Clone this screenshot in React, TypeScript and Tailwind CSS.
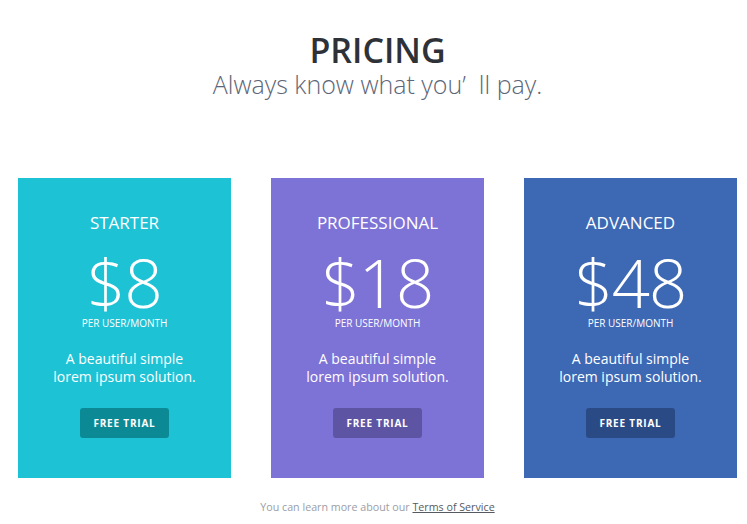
const plans = [
  { name: 'STARTER', price: '$8', card: 'bg-[#1ec2d5]', button: 'bg-[#0b8a96]' },
  { name: 'PROFESSIONAL', price: '$18', card: 'bg-[#7d72d6]', button: 'bg-[#5d54a4]' },
  { name: 'ADVANCED', price: '$48', card: 'bg-[#3d68b4]', button: 'bg-[#2a4a86]' },
]

function PlanCard({ name, price, card, button }: (typeof plans)[number]) {
  return (
    <div className={`flex h-[300px] w-[213px] flex-col items-center text-white ${card}`}>
      <h3 className="mt-[34px] text-[17px] leading-[22px] font-normal">{name}</h3>
      <div className="mt-[18px] text-[67px] leading-[60px] font-light tracking-[-1px]">{price}</div>
      <div className="mt-[5px] text-[10px] leading-[12px]">PER USER/MONTH</div>
      <p className="mt-[21px] text-center text-[14px] leading-[18px]">
        A beautiful simple
        <br />
        lorem ipsum solution.
      </p>
      <button
        className={`mt-[22px] h-[30px] w-[89px] rounded-[3px] text-[10px] font-bold tracking-[0.8px] ${button}`}
      >
        FREE TRIAL
      </button>
    </div>
  )
}

export default function App() {
  return (
    <div className="flex h-[524px] w-[747px] flex-col items-center bg-white pl-[8px] font-['Open_Sans',sans-serif]">
      <h1 className="mt-[28px] text-[34px] leading-[44px] font-semibold text-[#2e3238]">PRICING</h1>
      <p className="mt-[-4px] text-[25px] leading-[32px] font-light text-[#5d6677]">
        Always know what you’&nbsp;&nbsp;ll pay.
      </p>
      <div className="mt-[78px] flex gap-[40px]">
        {plans.map((plan) => (
          <PlanCard key={plan.name} {...plan} />
        ))}
      </div>
      <p className="mt-[21px] text-[10.7px] leading-[16px] text-[#9a9ea6]">
        You can learn more about our{' '}
        <a href="#" className="text-[#555a62] underline">
          Terms of Service
        </a>
      </p>
    </div>
  )
}
